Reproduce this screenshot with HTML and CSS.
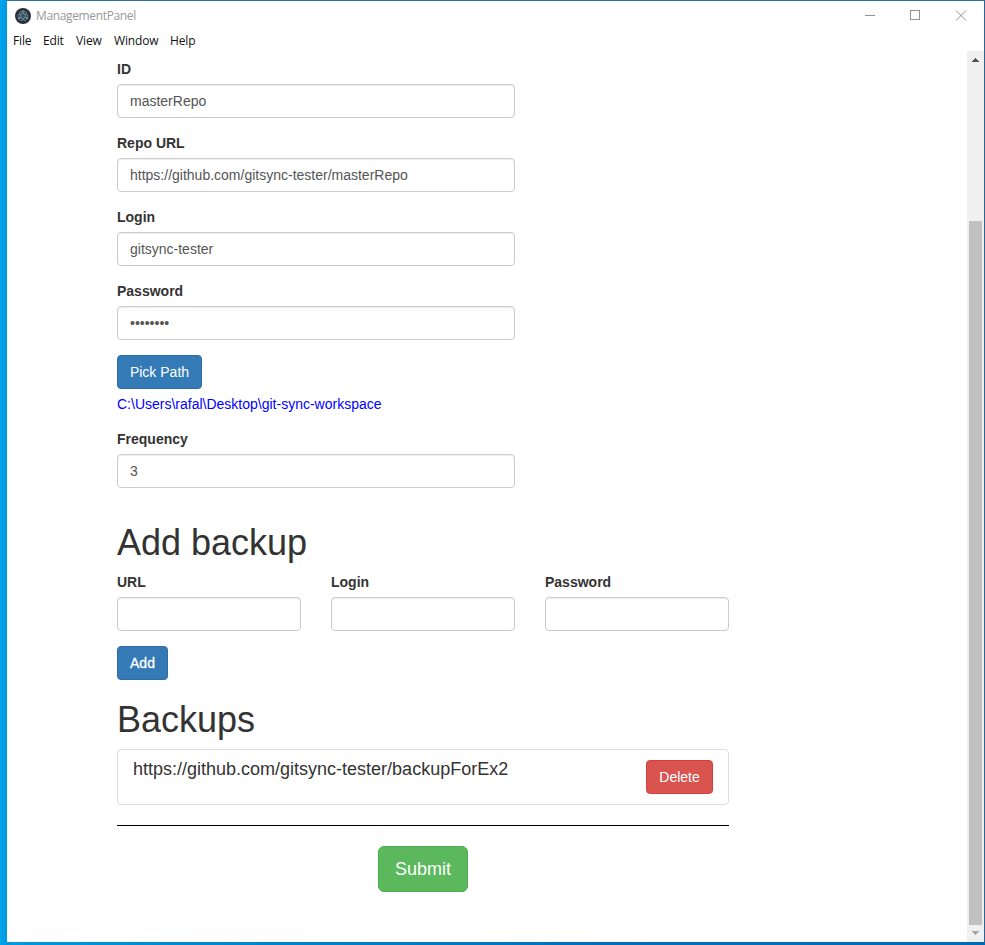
FILE: index.html
```
<!DOCTYPE html>
<html lang="en">
<head>
<meta charset="utf-8">
<title>ManagementPanel</title>
<link rel="stylesheet" href="styles.css">
</head>
<body>
<div class="window">
  <header class="titlebar">
    <svg class="app-icon" viewBox="0 0 16 16" width="16" height="16">
      <circle cx="8" cy="8" r="8" fill="#2b2e3b"/>
      <g fill="none" stroke="#9feaf9" stroke-width=".6" opacity=".7">
        <ellipse cx="8" cy="8" rx="5.2" ry="2.200"/>
        <ellipse cx="8" cy="8" rx="5.2" ry="2.200" transform="rotate(60 8 8)"/>
        <ellipse cx="8" cy="8" rx="5.2" ry="2.200" transform="rotate(120 8 8)"/>
      </g>
      <g fill="#9feaf9"><circle cx="8" cy="8" r=".6"/><circle cx="3.6" cy="10.2" r=".6"/><circle cx="12.4" cy="10.2" r=".6"/><circle cx="8" cy="2.9" r=".6"/></g>
    </svg>
    <span class="title">ManagementPanel</span>
    <svg class="controls" width="102" height="12" viewBox="0 0 102 12" fill="none" stroke="#929292">
      <path d="M0 5.5H10"/>
      <rect x="45.500" y=".5" width="9" height="9"/>
      <path d="M91 .5L101 10.500M101 .5L91 10.500"/>
    </svg>
  </header>
  <nav class="menu"><span class="m-file">File</span><span class="m-edit">Edit</span><span class="m-view">View</span><span class="m-window">Window</span><span class="m-help">Help</span></nav>
  <div class="viewport">
    <main class="content">
      <div class="half">
        <div class="group"><label for="id">ID</label><input id="id" type="text" value="masterRepo"></div>
        <div class="group"><label for="repo">Repo URL</label><input id="repo" type="text" value="https://github.com/gitsync-tester/masterRepo"></div>
        <div class="group"><label for="login">Login</label><input id="login" type="text" value="gitsync-tester"></div>
        <div class="group"><label for="password">Password</label><input id="password" type="text" class="secret" value="••••••••"></div>
        <div class="group"><button class="btn primary pick">Pick Path</button><p class="path">C:\Users\rafal\Desktop\git-sync-workspace</p></div>
        <div class="group"><label for="frequency">Frequency</label><input id="frequency" type="text" value="3"></div>
      </div>
      <h1>Add backup</h1>
      <div class="row">
        <div class="group"><label for="b-url">URL</label><input id="b-url" type="text"></div>
        <div class="group"><label for="b-login">Login</label><input id="b-login" type="text"></div>
        <div class="group"><label for="b-password">Password</label><input id="b-password" type="text"></div>
      </div>
      <button class="btn primary add">Add</button>
      <h1>Backups</h1>
      <div class="backup"><span class="backup-url">https://github.com/gitsync-tester/backupForEx2</span><button class="btn danger">Delete</button></div>
      <hr>
      <button class="btn success">Submit</button>
    </main>
    <div class="scrollbar">
      <svg width="7" height="4" viewBox="0 0 7 4" shape-rendering="crispEdges"><path d="M3 0h1v1h1v1h1v1h1v1H0V3h1V2h1V1h1z" fill="#505050"/></svg>
      <div class="thumb"></div>
      <svg width="7" height="4" viewBox="0 0 7 4" shape-rendering="crispEdges"><path d="M0 0h7v1H6v1H5v1H4v1H3V3H2V2H1V1H0z" fill="#a3a3a3"/></svg>
    </div>
  </div>
</div>
</body>
</html>
```
FILE: styles.css
```
* { box-sizing: border-box; }
body {
  margin: 0;
  height: 945px;
  padding: 0 0 3px 7px;
  overflow: hidden;
  background: linear-gradient(to right, #00a4ef 0, #0099dc 7px, #0089cd 200px, #006fb8 600px, #006bb3);
  font-family: "Liberation Sans", Arial, sans-serif;
  font-size: 14px;
  line-height: 20px;
  color: #333;
}
.window {
  height: 942px;
  display: flex;
  flex-direction: column;
  background: #fff;
  border-top: 1px solid #2a719f;
  border-right: 1px solid #2b6595;
}
.titlebar, .menu { font-family: "Open Sans", "Noto Sans", sans-serif; font-size: 12px; }
.titlebar { height: 29px; display: flex; align-items: center; padding: 0 17px 0 8px; }
.app-icon { flex: none; }
.title { margin-left: 5px; color: #999; letter-spacing: -.36px; }
.controls { margin-left: auto; }
.menu { height: 21px; display: flex; line-height: 21px; padding-left: 6px; color: #111; letter-spacing: -.15px; }
.m-file { width: 30px; }
.m-edit { width: 33px; }
.m-view { width: 38px; }
.m-window { width: 56px; }
.viewport { flex: 1; min-height: 0; display: flex; justify-content: space-between; }
.content { width: 722px; padding: 8px 0 0 110px; }
.half { width: 398px; margin-bottom: 35px; }
.group { margin-bottom: 15px; }
label { display: block; font-weight: bold; margin-bottom: 5px; }
input {
  display: block;
  width: 100%;
  height: 34px;
  padding: 6px 12px;
  border: 1px solid #ccc;
  border-radius: 4px;
  box-shadow: inset 0 1px 1px rgba(0, 0, 0, .075);
  background: #fff;
  color: #555;
  font: inherit;
}
.path { margin: 5px 0 0; color: #00f; }
h1 { margin: 20px 0 10px; font-size: 36px; line-height: 39px; font-weight: normal; }
.row { display: grid; grid-template-columns: repeat(3, 1fr); gap: 30px; }
.btn {
  display: block;
  height: 34px;
  padding: 0;
  border: 1px solid;
  border-radius: 4px;
  font: inherit;
  color: #fff;
}
.primary { background: #337ab7; border-color: #2e6da4; }
.pick { width: 85px; }
.add { width: 51px; -webkit-text-stroke: .3px #fff; }
.danger { width: 67px; background: #d9534f; border-color: #d43f3a; }
.success {
  width: 90px;
  height: 46px;
  margin: 0 auto;
  border-radius: 6px;
  background: #5cb85c;
  border-color: #4cae4c;
  font-size: 18px;
}
.backup {
  height: 56px;
  display: flex;
  justify-content: space-between;
  padding: 10px 15px;
  border: 1px solid #ddd;
  border-radius: 4px;
}
.backup-url { font-size: 18px; line-height: 18px; }
hr { margin: 20px 0; border: 0; border-top: 1px solid #000; }
.scrollbar {
  width: 17px;
  display: flex;
  flex-direction: column;
  align-items: center;
  background: #f0f0f0;
  padding: 7px 0;
}
.thumb { width: 13px; height: 704px; margin: 159px 0 6px; background: #c1c1c1; }
```
